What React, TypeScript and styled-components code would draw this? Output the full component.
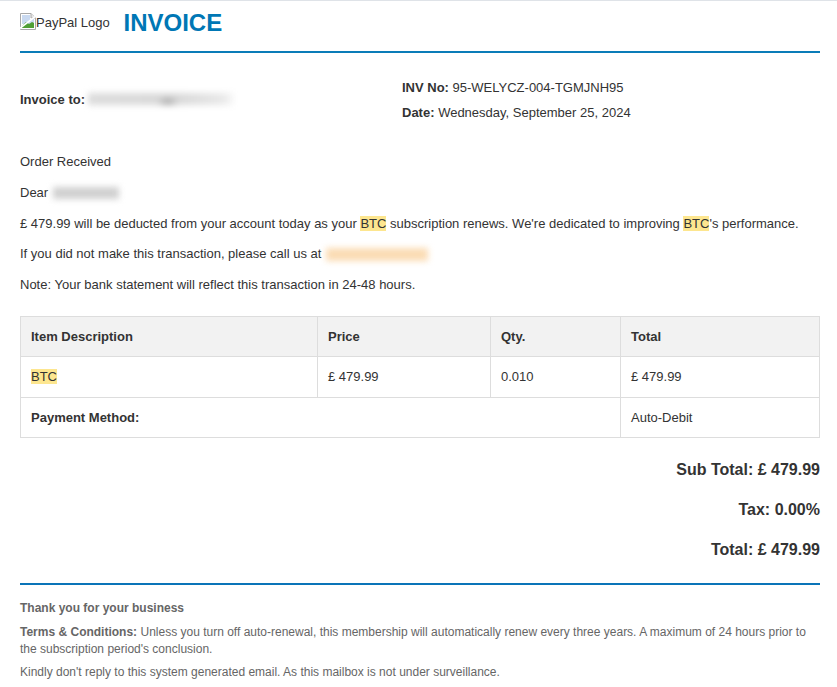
import React from "react";
import styled, { createGlobalStyle } from "styled-components";

const Global = createGlobalStyle`
  html, body { margin: 0; padding: 0; background: #fff; }
  body { font-family: "Liberation Sans", Arial, sans-serif; font-size: 13px; color: #333; overflow: hidden; }
`;
const Page = styled.div`
  border-top: 1px solid #dfe3e8;
  padding: 0 17px 0 20px;
  height: 686px;
  overflow: hidden;
`;
const Header = styled.header`
  display: flex;
  align-items: center;
  height: 50px;
  border-bottom: 2px solid #0a7cb8;
`;
const Logo = styled.span`
  display: flex;
  align-items: flex-start;
  width: 103.5px;
  font-size: 13px;
  line-height: 15px;
  color: #333;
  margin-top: -7px;
  svg { margin-top: -2px; }
`;
const Title = styled.h1`
  margin: 0 0 6px;
  font-size: 24px;
  font-weight: 700;
  line-height: 30px;
  color: #0077b5;
`;
const InfoRow = styled.section`
  display: flex;
  align-items: center;
  height: 94px;
`;
const InvoiceTo = styled.div`
  display: flex;
  align-items: center;
  width: 382px;
  margin-top: -2px;
`;
const Strong = styled.strong`
  font-weight: 700;
`;
const Blur = styled.span<{ $w: number; $h: number; $bg: string; $gap: number }>`
  display: inline-block;
  vertical-align: middle;
  width: ${(p) => p.$w}px;
  height: ${(p) => p.$h}px;
  background: ${(p) => p.$bg};
  filter: blur(3px);
  margin-left: ${(p) => p.$gap}px;
`;
const Meta = styled.div`
  display: flex;
  flex-direction: column;
  gap: 10px;
  line-height: 15px;
`;
const Message = styled.section`
  padding-top: 7px;
`;
const P = styled.p`
  margin: 0 0 15.75px;
  line-height: 15px;
`;
const Mark = styled.mark`
  background: #fde68f;
  color: #333;
`;
const Table = styled.table`
  width: 800px;
  border-collapse: collapse;
  margin-top: 24px;
  table-layout: fixed;
`;
const Th = styled.th<{ $w?: number }>`
  width: ${(p) => (p.$w ? `${p.$w}px` : "auto")};
  height: 40px;
  box-sizing: border-box;
  padding: 0 10px;
  border: 1px solid #dddddd;
  background: #f2f2f2;
  text-align: left;
  font-weight: 700;
`;
const Td = styled.td<{ $strong?: boolean; $tall?: boolean }>`
  height: ${(p) => (p.$tall ? 41 : 40)}px;
  box-sizing: border-box;
  padding: 0 10px ${(p) => (p.$tall ? 1 : 0)}px;
  border: 1px solid #dddddd;
  font-weight: ${(p) => (p.$strong ? 700 : 400)};
`;
const Totals = styled.section`
  width: 800px;
  display: flex;
  flex-direction: column;
  align-items: flex-end;
  gap: 22px;
  padding-top: 23px;
  font-size: 16px;
  font-weight: 700;
  line-height: 18px;
`;
const Footer = styled.footer`
  width: 800px;
  margin-top: 24px;
  padding-top: 15px;
  border-top: 2px solid #0a74b8;
  font-size: 12px;
  line-height: 17px;
  color: #666;
`;
const FootP = styled.p`
  margin: 0 0 6.5px;
`;

const BrokenImage = () => (
  <svg width="16" height="17" viewBox="0 0 16 17" style={{ flex: "none" }}>
    <path d="M0.5 0.5H11L15.5 5V16.5H0.5Z" fill="#fff" stroke="#a8a8a8" />
    <path d="M11 0.5V5H15.5" fill="#e8e8e8" stroke="#a8a8a8" />
    <path d="M2 2H10V6H14V11H2Z" fill="#c9d9f0" />
    <path d="M2 15V13L6 9L9 11L12 9L14 10V15Z" fill="#4f9f35" />
    <path d="M-1 16L16 3" stroke="#fff" strokeWidth="1.6" />
  </svg>
);

export default function App() {
  return (
    <>
      <Global />
      <Page>
        <Header>
          <Logo>
            <BrokenImage />
            PayPal Logo
          </Logo>
          <Title>INVOICE</Title>
        </Header>
        <InfoRow>
          <InvoiceTo>
            <Strong>Invoice to:</Strong>
            <Blur
              $w={145}
              $h={12}
              $gap={3}
              $bg="radial-gradient(ellipse 11px 7px at 55% 85%, #a0a0a0, transparent), linear-gradient(90deg, #dcdcdc, #d8d8d8 60%, #e8e8e8 92%, #f6f6f6)"
            />
          </InvoiceTo>
          <Meta>
            <div>
              <Strong>INV No:</Strong> 95-WELYCZ-004-TGMJNH95
            </div>
            <div>
              <Strong>Date:</Strong> Wednesday, September 25, 2024
            </div>
          </Meta>
        </InfoRow>
        <Message>
          <P>Order Received</P>
          <P>
            Dear
            <Blur $w={66} $h={12} $gap={5} $bg="#d0d0d0" />
          </P>
          <P>
            £ 479.99 will be deducted from your account today as your <Mark>BTC</Mark> subscription renews. We're dedicated to improving <Mark>BTC</Mark>'s performance.
          </P>
          <P>
            If you did not make this transaction, please call us at
            <Blur $w={102} $h={13} $gap={5} $bg="#fbdcb4" />
          </P>
          <P>Note: Your bank statement will reflect this transaction in 24-48 hours.</P>
        </Message>
        <Table>
          <thead>
            <tr>
              <Th $w={297}>Item Description</Th>
              <Th $w={173}>Price</Th>
              <Th $w={130}>Qty.</Th>
              <Th>Total</Th>
            </tr>
          </thead>
          <tbody>
            <tr>
              <Td $tall><Mark>BTC</Mark></Td>
              <Td $tall>£ 479.99</Td>
              <Td $tall>0.010</Td>
              <Td $tall>£ 479.99</Td>
            </tr>
            <tr>
              <Td $strong colSpan={3}>Payment Method:</Td>
              <Td>Auto-Debit</Td>
            </tr>
          </tbody>
        </Table>
        <Totals>
          <div>Sub Total: £ 479.99</div>
          <div>Tax: 0.00%</div>
          <div>Total: £ 479.99</div>
        </Totals>
        <Footer>
          <FootP><Strong>Thank you for your business</Strong></FootP>
          <FootP>
            <Strong>Terms &amp; Conditions:</Strong> Unless you turn off auto-renewal, this membership will automatically renew every three years. A maximum of 24 hours prior to the subscription period's conclusion.
          </FootP>
          <FootP>Kindly don't reply to this system generated email. As this mailbox is not under surveillance.</FootP>
        </Footer>
      </Page>
    </>
  );
}
